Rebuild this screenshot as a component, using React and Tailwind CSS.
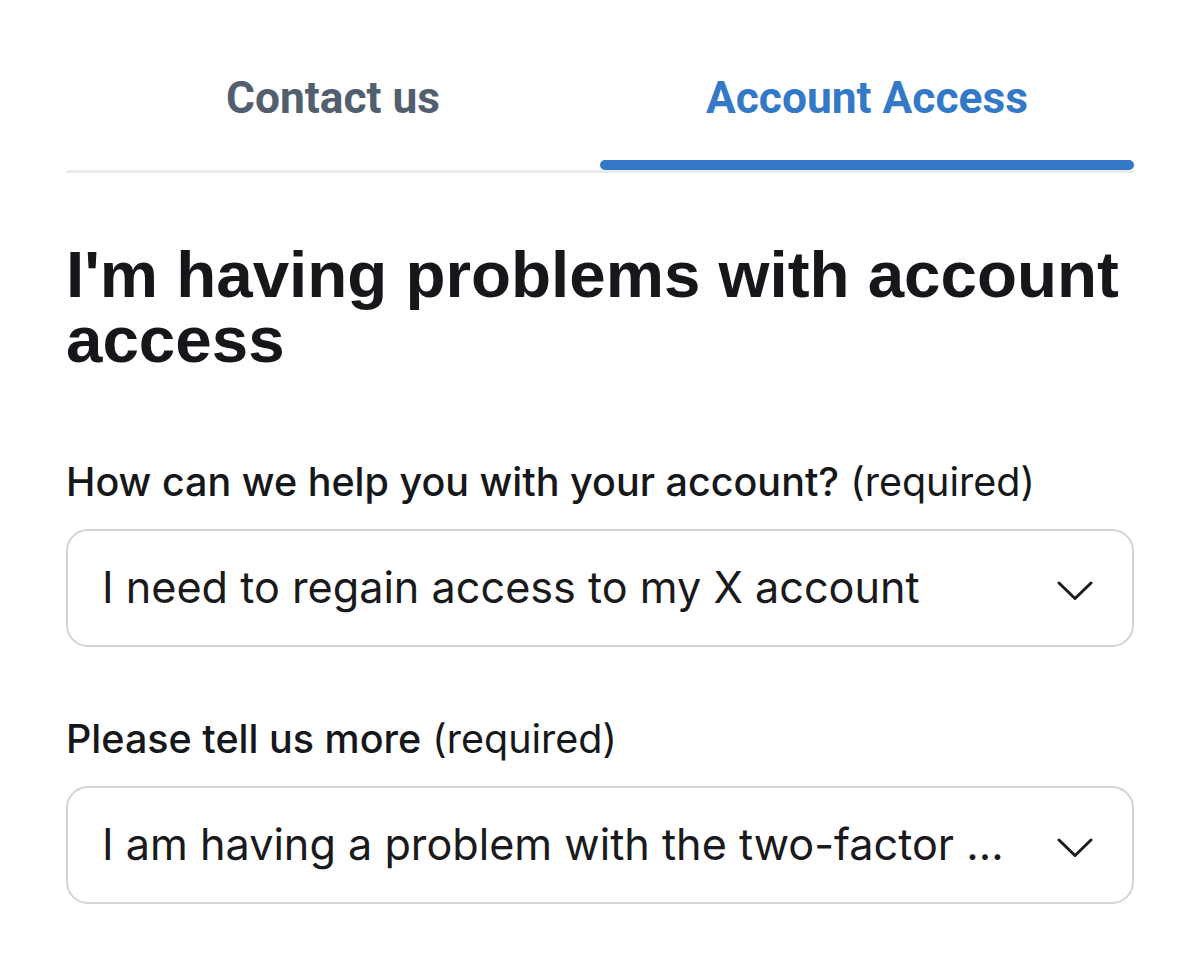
import React from "react";

function Chevron() {
  return (
    <svg width="36" height="22" viewBox="0 0 36 22" fill="none" className="mt-[5px] shrink-0">
      <path d="M2 3 L18 18.5 L34 3" stroke="#1c1c1e" strokeWidth="3" strokeLinecap="round" strokeLinejoin="round" />
    </svg>
  );
}

function SelectBox({ text }) {
  return (
    <div className="flex h-[118px] items-center justify-between rounded-[22px] border-2 border-[#d0d4d9] bg-white pl-[34px] pr-[39px]">
      <span className="text-[43.2px] leading-none text-[#1a1a1c] [font-family:Inter,'Liberation_Sans',sans-serif]">{text}</span>
      <Chevron />
    </div>
  );
}

export default function App() {
  return (
    <div className="min-h-[955px] w-[1200px] bg-white">
      <div className="mx-[66px] w-[1068px]">
        <div className="grid grid-cols-2">
          <div className="flex flex-col items-center">
            <div className="pt-[74px] text-[44.3px] font-bold leading-[48px] text-[#525f6f] [font-family:Roboto,sans-serif]">Contact us</div>
            <div className="mt-[38px] h-[10px] w-full" />
          </div>
          <div className="flex flex-col items-center">
            <div className="pt-[74px] text-[44.3px] font-bold leading-[48px] text-[#3478c8] [font-family:Roboto,sans-serif]">Account Access</div>
            <div className="mt-[38px] h-[10px] w-full rounded-full bg-[#3478c8]" />
          </div>
        </div>
        <div className="h-[3px] bg-[#e8eaed]" />

        <h1 className="mt-[69px] text-[65.5px] font-bold leading-[65px] text-[#16171a] [font-family:'Liberation_Sans',Arial,sans-serif]">
          I'm having problems with account access
        </h1>

        <div className="mt-[90px] text-[39.5px] leading-[40px] text-[#16171a] [font-family:Inter,'Liberation_Sans',sans-serif]">
          <span className="font-medium">How can we help you with your account?</span> <span>(required)</span>
        </div>
        <div className="mt-[27px]">
          <SelectBox text="I need to regain access to my X account" />
        </div>

        <div className="mt-[72px] text-[39.5px] leading-[40px] text-[#16171a] [font-family:Inter,'Liberation_Sans',sans-serif]">
          <span className="font-medium">Please tell us more</span> <span>(required)</span>
        </div>
        <div className="mt-[27px]">
          <SelectBox text="I am having a problem with the two-factor ..." />
        </div>
      </div>
    </div>
  );
}
